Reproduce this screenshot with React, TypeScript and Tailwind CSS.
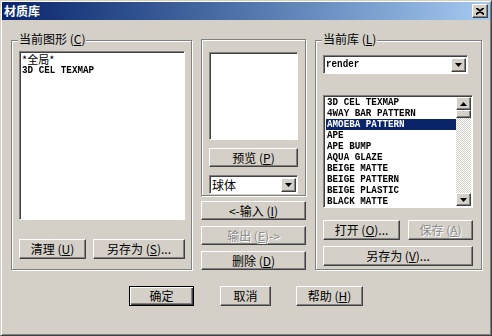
import type { ReactNode } from "react";

const raised =
  "border border-t-white border-l-white border-r-[#404040] border-b-[#404040] shadow-[inset_-1px_-1px_0_#808080]";
const sunken =
  "border border-t-[#808080] border-l-[#808080] border-r-white border-b-white shadow-[inset_1px_1px_0_#404040]";
const etched =
  "border border-[#808080] shadow-[inset_1px_1px_0_#fff,1px_1px_0_#fff]";

// narrow fixed-width list font
const Mono = ({ children }: { children: ReactNode }) => (
  <span className="block origin-left scale-x-[0.84] whitespace-nowrap font-['Liberation_Mono',monospace] font-bold text-[11px] leading-[11px]">
    {children}
  </span>
);

const Btn = ({
  children,
  className = "",
  disabled = false,
  def = false,
}: {
  children: ReactNode;
  className?: string;
  disabled?: boolean;
  def?: boolean;
}) => (
  <div
    className={`flex items-center justify-center bg-[#d4d0c8] text-[12px] leading-none ${
      def
        ? "border border-black shadow-[inset_1px_1px_0_#fff,inset_-1px_-1px_0_#404040,inset_-2px_-2px_0_#808080]"
        : raised
    } ${disabled ? "text-[#8c8c8c] [text-shadow:1px_1px_0_#fff]" : "text-black"} ${className}`}
  >
    {children}
  </div>
);

const Arrow = ({ up = false }: { up?: boolean }) => (
  <svg width="7" height="4" viewBox="0 0 7 4">
    {up ? <polygon points="0,4 7,4 3.5,0" fill="#000" /> : <polygon points="0,0 7,0 3.5,4" fill="#000" />}
  </svg>
);

const Combo = ({ children, className = "" }: { children: ReactNode; className?: string }) => (
  <div className={`flex items-center bg-white ${sunken} pl-[2px] pr-[1px] py-[1px] ${className}`}>
    <div className="flex-1 leading-[14px]">{children}</div>
    <div className={`w-[15px] h-[14px] flex items-center justify-center bg-[#d4d0c8] ${raised}`}>
      <Arrow />
    </div>
  </div>
);

const lib = [
  "3D CEL TEXMAP",
  "4WAY BAR PATTERN",
  "AMOEBA PATTERN",
  "APE",
  "APE BUMP",
  "AQUA GLAZE",
  "BEIGE MATTE",
  "BEIGE PATTERN",
  "BEIGE PLASTIC",
  "BLACK MATTE",
];

const U = ({ c }: { c: string }) => <span className="underline">{c}</span>;

export default function App() {
  return (
    <div className="w-[492px] h-[336px] bg-[#d4d0c8] font-['Noto_Sans_CJK_SC',sans-serif] text-[12px] text-black border border-t-[#d4d0c8] border-l-[#d4d0c8] border-r-[#404040] border-b-[#404040] shadow-[inset_1px_1px_0_#fff,inset_-1px_-1px_0_#808080] p-[1px] flex flex-col select-none">
      <div className="h-[18px] flex items-center justify-between bg-gradient-to-r from-[#0a246a] to-[#a6caf0] pl-[2px] pr-[2px]">
        <span className="text-white font-bold text-[12px] leading-none">材质库</span>
        <div className={`w-[16px] h-[14px] flex items-center justify-center bg-[#d4d0c8] ${raised}`}>
          <svg width="8" height="7" viewBox="0 0 8 7">
            <path d="M0 0 L8 7 M8 0 L0 7 M1 0 L8 6 M7 0 L0 6" stroke="#000" strokeWidth="1.2" />
          </svg>
        </div>
      </div>

      <div className="flex items-start pl-[9px] pt-[20px] gap-[9px]">
        {/* left group */}
        <div className={`relative w-[181px] h-[230px] ${etched} pt-[10px] pl-[7px] flex flex-col`}>
          <span className="absolute -top-[8px] left-[6px] px-[1px] bg-[#d4d0c8] leading-none">
            当前图形 (<U c="C" />)
          </span>
          <div className={`w-[166px] h-[169px] bg-white ${sunken} pl-[2px] pt-[1px]`}>
            <div className="h-[12px] text-[11px] leading-[12px]">*全局*</div>
            <div className="h-[11px] flex items-center">
              <Mono>3D CEL TEXMAP</Mono>
            </div>
          </div>
          <div className="flex gap-[7px] mt-[19px]">
            <Btn className="w-[67px] h-[20px]">
              清理 (<U c="U" />)
            </Btn>
            <Btn className="w-[92px] h-[20px]">
              另存为 (<U c="S" />)...
            </Btn>
          </div>
        </div>

        {/* middle column */}
        <div className="w-[105px] flex flex-col -mt-[1px]">
          <div className={`h-[157px] ${etched} pl-[7px] pt-[12px] flex flex-col`}>
            <div className={`w-[89px] h-[88px] bg-white ${sunken}`} />
            <Btn className="w-[89px] h-[19px] mt-[8px]">
              预览 (<U c="P" />)
            </Btn>
            <Combo className="w-[89px] h-[19px] mt-[8px]">球体</Combo>
          </div>
          <div className="flex flex-col gap-[6px] mt-[5px]">
            <Btn className="h-[19px]">
              &lt;-输入 (<U c="I" />)
            </Btn>
            <Btn className="h-[19px]" disabled>
              输出 (<U c="E" />)-&gt;
            </Btn>
            <Btn className="h-[19px]">
              删除 (<U c="D" />)
            </Btn>
          </div>
        </div>

        {/* right group */}
        <div className={`relative w-[167px] h-[230px] ${etched} pt-[14px] pl-[7px] flex flex-col`}>
          <span className="absolute -top-[8px] left-[6px] px-[1px] bg-[#d4d0c8] leading-none">
            当前库 (<U c="L" />)
          </span>
          <Combo className="w-[145px] h-[19px]">
            <Mono>render</Mono>
          </Combo>
          <div className={`w-[150px] h-[113px] mt-[21px] bg-white ${sunken} pl-[2px] pr-[1px] pt-[1px] pb-[1px] flex`}>
            <div className="flex-1 flex flex-col overflow-hidden">
              {lib.map((n, i) => (
                <div
                  key={n}
                  className={`h-[11px] shrink-0 pl-[1px] flex items-center ${i === 2 ? "bg-[#0a246a] text-white" : ""}`}
                >
                  <Mono>{n}</Mono>
                </div>
              ))}
            </div>
            <div className="w-[15px] flex flex-col">
              <div className={`h-[13px] flex items-center justify-center bg-[#d4d0c8] ${raised}`}>
                <Arrow up />
              </div>
              <div className={`h-[8px] bg-[#d4d0c8] ${raised}`} />
              <div className="flex-1 bg-[repeating-conic-gradient(#ffffff_0_25%,#d4d0c8_0_50%)] bg-[length:2px_2px]" />
              <div className={`h-[13px] flex items-center justify-center bg-[#d4d0c8] ${raised}`}>
                <Arrow />
              </div>
            </div>
          </div>
          <div className="flex gap-[8px] mt-[12px]">
            <Btn className="w-[77px] h-[20px]">
              打开 (<U c="O" />)...
            </Btn>
            <Btn className="w-[65px] h-[20px]" disabled>
              保存 (<U c="A" />)
            </Btn>
          </div>
          <Btn className="w-[150px] h-[20px] mt-[6px]">
            另存为 (<U c="V" />)...
          </Btn>
        </div>
      </div>

      <div className="flex pl-[127px] mt-[16px]">
        <Btn def className="w-[65px] h-[20px]">
          确定
        </Btn>
        <Btn className="w-[51px] h-[20px] ml-[26px]">取消</Btn>
        <Btn className="w-[67px] h-[20px] ml-[25px]">
          帮助 (<U c="H" />)
        </Btn>
      </div>
    </div>
  );
}
